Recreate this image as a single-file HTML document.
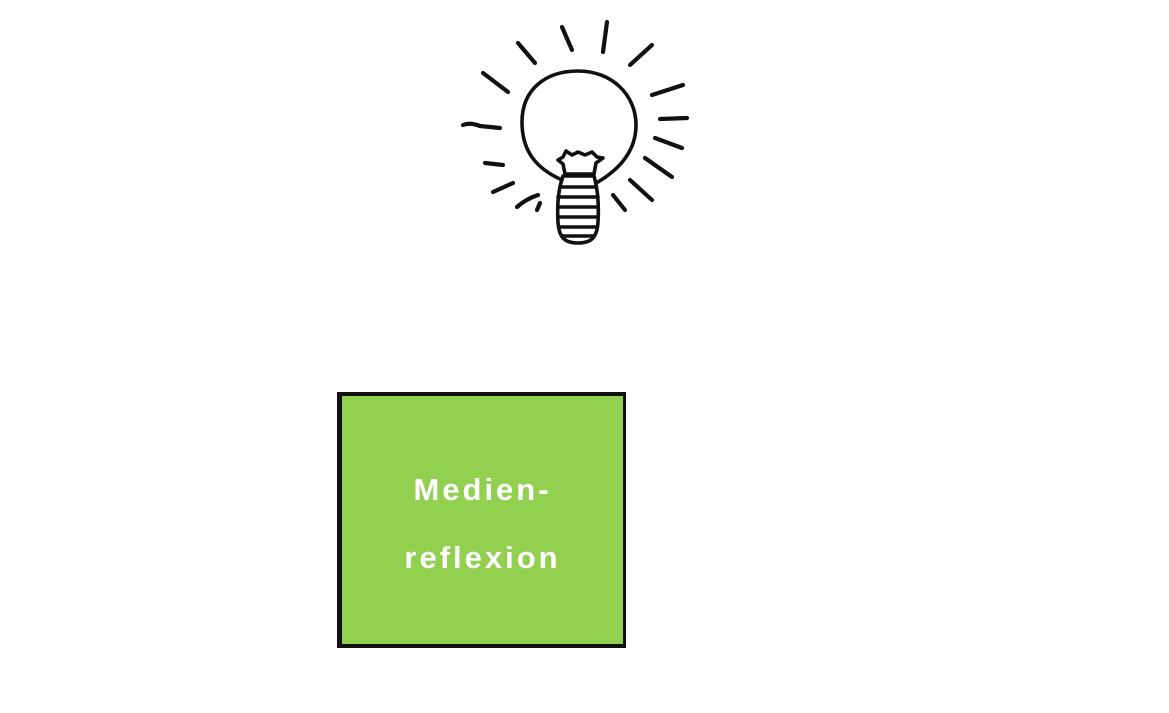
<!DOCTYPE html>
<html><head><meta charset="utf-8"><style>
html,body{margin:0;padding:0;background:#fff;width:1169px;height:713px;overflow:hidden;position:relative;font-family:"Liberation Sans",sans-serif}
.box{position:absolute;left:337px;top:392px;width:281px;height:248px;background:#92D050;border-style:solid;border-color:#111;border-width:4px 3px 4px 5px}
.t{position:absolute;left:0;width:100%;text-align:center;color:#fff;font-weight:bold;font-size:31px;letter-spacing:3px;line-height:1}
</style></head><body>
<svg width="1169" height="713" style="position:absolute;left:0;top:0" fill="none" stroke="#111" stroke-linecap="round" stroke-linejoin="round">
<g stroke-width="4.2">
<path d="M562,27 L572,50"/><path d="M607,22 L603,52"/><path d="M652,45 L630,65"/>
<path d="M518,43 L535,63"/><path d="M483,73 L508,92"/><path d="M652,95 L683,85"/>
<path d="M660,119 L687,118"/><path d="M463,125 Q470,122 480,126 L500,128"/><path d="M655,138 L682,148"/>
<path d="M485,163 L503,165"/><path d="M645,158 L672,177"/><path d="M493,192 L513,183"/>
<path d="M630,180 L652,200"/><path d="M517,207 Q526,199 538,195"/><path d="M540,203 L537,210"/>
<path d="M613,195 L625,210"/>
</g>
<g stroke-width="3.6">
<path d="M562,180 C535,168 522,150 522,122 C522,90 545,71 578,71 C612,71 636,95 636,125 C636,152 618,170 598,182"/>
<path d="M558,160 L563,157 L566,151 L572,155 L578,152 L585,155 L592,152 L597,157 L603,158 L596,163 L594,174 L565,174 L563,164 Z"/>
<path d="M563,176 C558,190 557,205 558,222 C559,238 565,243 578,243 C591,243 597,238 598,222 C599,205 598,190 594,176 Z"/>
<path d="M560,187 L596,187"/><path d="M558,197 L598,197"/><path d="M558,207 L598,207"/><path d="M558,217 L598,217"/><path d="M559,227 L597,227"/><path d="M563,236 L593,236"/>
</g>
</svg>
<div class="box">
<div class="t" style="top:78px">Medien-</div>
<div class="t" style="top:146px">reflexion</div>
</div>
</body></html>
